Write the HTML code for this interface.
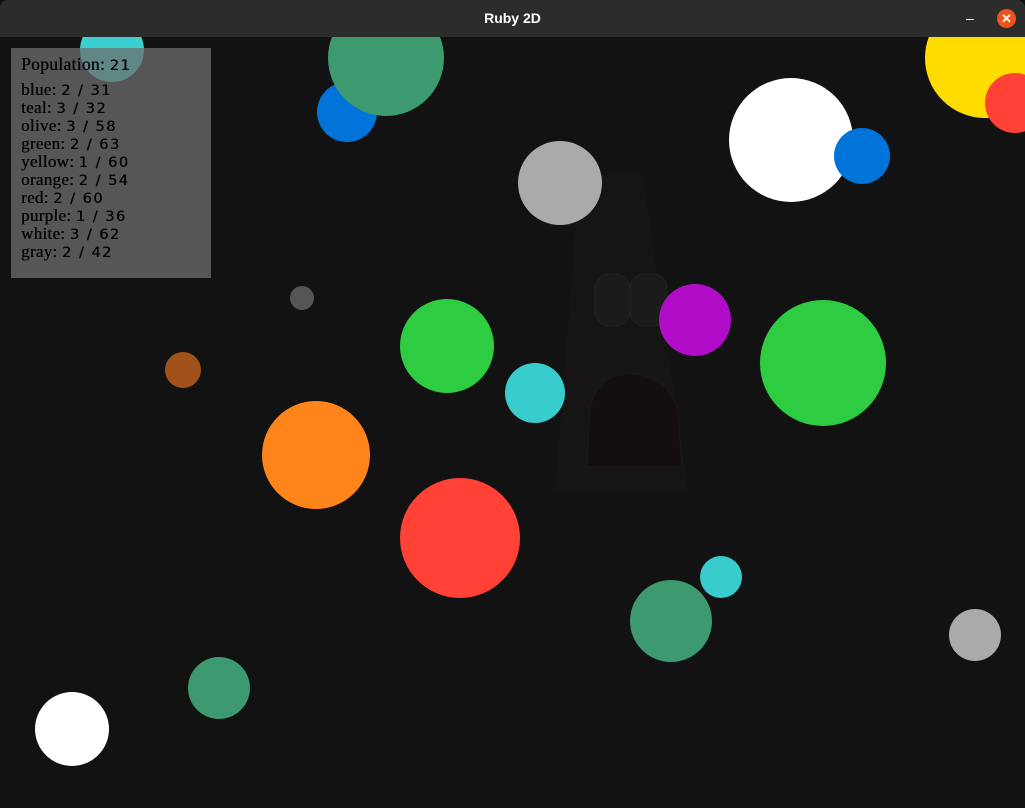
<!DOCTYPE html><html><head><style>
body{margin:0;width:1025px;height:808px;overflow:hidden;background:#111;font-family:"Liberation Serif",serif}
#tb{position:absolute;left:0;top:0;width:1025px;height:37px;background:#2c2c2c;border-radius:8px 8px 0 0;z-index:5;color:#fff;font:bold 14px "Liberation Sans",sans-serif;text-align:center;line-height:37px}
#c{position:absolute;left:0;top:37px;width:1025px;height:771px;background:#121212;overflow:hidden}
.o{position:absolute;border-radius:50%}
#p{position:absolute;left:11px;top:11px;width:200px;height:230px;background:rgba(110,110,110,.75);color:#050505;font-size:17px;letter-spacing:.3px;text-shadow:0.4px 0 0 #050505}
#p div{position:absolute;left:10px;white-space:nowrap}
#p span{font-family:"DejaVu Sans",sans-serif;font-size:14.5px;letter-spacing:1.5px}
</style></head><body>
<div id="tb">Ruby 2D<span style="position:absolute;left:966px;top:0;font-weight:normal">–</span><span style="position:absolute;left:997px;top:9px;width:19px;height:19px;border-radius:50%;background:#e95420;line-height:19px;font-size:13px">✕</span></div>
<div id="c">
<svg width="1025" height="771" style="position:absolute;left:0;top:0">
<path d="M580 138 L643 138 L688 453 L555 453 Z" fill="#171414"/>
<rect x="595" y="237" width="35" height="52" rx="14" fill="#1b1b1b" stroke="#222"/>
<rect x="630" y="237" width="37" height="52" rx="14" fill="#1b1b1b" stroke="#222"/>
<path d="M587 430 L590 370 Q600 335 632 337 Q670 340 678 375 L682 430 Z" fill="#130f0f" stroke="#1c1818"/>
</svg>
<div class="o" style="left:80px;top:-19px;width:64px;height:64px;background:#3ccfcf"></div>
<div class="o" style="left:317px;top:45px;width:60px;height:60px;background:#0074d9"></div>
<div class="o" style="left:328px;top:-37px;width:116px;height:116px;background:#3d9970"></div>
<div class="o" style="left:925px;top:-39px;width:120px;height:120px;background:#ffdc00"></div>
<div class="o" style="left:985px;top:36px;width:60px;height:60px;background:#ff4136"></div>
<div class="o" style="left:729px;top:41px;width:124px;height:124px;background:#fff"></div>
<div class="o" style="left:834px;top:91px;width:56px;height:56px;background:#0074d9"></div>
<div class="o" style="left:518px;top:104px;width:84px;height:84px;background:#aaa"></div>
<div class="o" style="left:290px;top:249px;width:24px;height:24px;background:#555"></div>
<div class="o" style="left:400px;top:262px;width:94px;height:94px;background:#2ecc40"></div>
<div class="o" style="left:659px;top:247px;width:72px;height:72px;background:#b10dc9"></div>
<div class="o" style="left:760px;top:263px;width:126px;height:126px;background:#2ecc40"></div>
<div class="o" style="left:165px;top:315px;width:36px;height:36px;background:#a0521a"></div>
<div class="o" style="left:505px;top:326px;width:60px;height:60px;background:#39cccc"></div>
<div class="o" style="left:262px;top:364px;width:108px;height:108px;background:#ff851b"></div>
<div class="o" style="left:400px;top:441px;width:120px;height:120px;background:#ff4136"></div>
<div class="o" style="left:700px;top:519px;width:42px;height:42px;background:#39cccc"></div>
<div class="o" style="left:630px;top:543px;width:82px;height:82px;background:#3d9970"></div>
<div class="o" style="left:949px;top:572px;width:52px;height:52px;background:#aaa"></div>
<div class="o" style="left:188px;top:620px;width:62px;height:62px;background:#3d9970"></div>
<div class="o" style="left:35px;top:655px;width:74px;height:74px;background:#fff"></div>
<div id="p">
<div style="top:6px;font-size:17.5px">Population: <span>21</span></div>
<div style="top:32px">blue: <span>2 / 31</span></div>
<div style="top:50px">teal: <span>3 / 32</span></div>
<div style="top:68px">olive: <span>3 / 58</span></div>
<div style="top:86px">green: <span>2 / 63</span></div>
<div style="top:104px">yellow: <span>1 / 60</span></div>
<div style="top:122px">orange: <span>2 / 54</span></div>
<div style="top:140px">red: <span>2 / 60</span></div>
<div style="top:158px">purple: <span>1 / 36</span></div>
<div style="top:176px">white: <span>3 / 62</span></div>
<div style="top:194px">gray: <span>2 / 42</span></div>
</div>
</div>
</body></html>
